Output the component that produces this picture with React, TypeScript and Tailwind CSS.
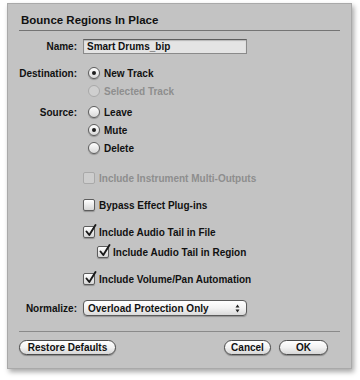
import React from "react";

const font = { fontFamily: '"Liberation Sans", Arial, sans-serif' };

function Radio({ on, disabled }: { on?: boolean; disabled?: boolean }) {
  return (
    <span
      className={
        "flex h-[12px] w-[12px] shrink-0 items-center justify-center rounded-full border " +
        (disabled
          ? "border-[#a9a9a9] bg-[#cfcfcf]"
          : "border-[#5d5d5d] bg-gradient-to-b from-[#ffffff] to-[#d8d8d8] shadow-[0_1px_1px_rgba(0,0,0,0.25)]")
      }
    >
      {on && <span className="h-[4px] w-[4px] rounded-full bg-[#1e1e1e]" />}
    </span>
  );
}

function Check({ on, disabled }: { on?: boolean; disabled?: boolean }) {
  return (
    <span
      className={
        "relative flex h-[12px] w-[12px] shrink-0 rounded-[2px] border " +
        (disabled
          ? "border-[#a9a9a9] bg-[#cdcdcd]"
          : "border-[#5d5d5d] bg-gradient-to-b from-[#ffffff] to-[#d6d6d6] shadow-[0_1px_1px_rgba(0,0,0,0.25)]")
      }
    >
      {on && (
        <svg
          className="absolute left-[1px] top-[-3px]"
          width="12"
          height="13"
          viewBox="0 0 12 13"
        >
          <path
            d="M1.5 7.5 L4.3 11 L10.5 1"
            fill="none"
            stroke="#1a1a1a"
            strokeWidth="1.9"
            strokeLinecap="round"
            strokeLinejoin="round"
          />
        </svg>
      )}
    </span>
  );
}

function Row({
  label,
  children,
  className = "",
}: {
  label?: string;
  children: React.ReactNode;
  className?: string;
}) {
  return (
    <div className={"flex items-center " + className}>
      <div className="w-[58px] shrink-0 whitespace-nowrap text-right">{label}</div>
      <div className="ml-[6px] flex items-center">{children}</div>
    </div>
  );
}

function Btn({ children, w }: { children: React.ReactNode; w: string }) {
  return (
    <div
      className={
        "flex h-[15px] items-center justify-center rounded-full border border-[#4b4b4b] bg-gradient-to-b from-[#ffffff] via-[#f2f2f2] to-[#d6d6d6] shadow-[0_1px_1px_rgba(0,0,0,0.3)] " +
        w
      }
    >
      {children}
    </div>
  );
}

export default function App() {
  return (
    <div className="h-[380px] w-[360px] bg-white pl-[7px] pt-[3px]" style={font}>
      <div className="h-[366px] w-[345px] border border-[#a9a9a9] bg-[#c3c3c3] px-[11px] text-[10px] font-bold text-[#111] shadow-[2px_3px_5px_rgba(0,0,0,0.35)]">
        <div className="mt-[9px] pl-[2px] text-[11.5px] leading-[15px]">Bounce Regions In Place</div>
        <div className="mt-[2px] h-[1px] w-[321px] bg-[#747474]" />

        <Row label="Name:" className="mt-[8px]">
          <div className="flex h-[15px] w-[164px] items-center border border-[#8a8a8a] border-t-[#5e5e5e] bg-[#e4e4e4] pl-[3px] shadow-[inset_0_1px_1px_rgba(0,0,0,0.2)]">
            Smart Drums_bip
          </div>
        </Row>

        <Row label="Destination:" className="mt-[10px] h-[18px]">
          <span className="ml-[5px] flex items-center gap-[4px]">
            <Radio on />
            New Track
          </span>
        </Row>
        <Row className="h-[18px]">
          <span className="ml-[5px] flex items-center gap-[4px] text-[#8e8e8e]">
            <Radio disabled />
            Selected Track
          </span>
        </Row>

        <Row label="Source:" className="mt-[3px] h-[18px]">
          <span className="ml-[5px] flex items-center gap-[4px]">
            <Radio />
            Leave
          </span>
        </Row>
        <Row className="h-[18px]">
          <span className="ml-[5px] flex items-center gap-[4px]">
            <Radio on />
            Mute
          </span>
        </Row>
        <Row className="h-[18px]">
          <span className="ml-[5px] flex items-center gap-[4px]">
            <Radio />
            Delete
          </span>
        </Row>

        <Row className="mt-[12px] h-[18px]">
          <span className="flex items-center gap-[4px] text-[#8e8e8e]">
            <Check disabled />
            Include Instrument Multi-Outputs
          </span>
        </Row>
        <Row className="mt-[9px] h-[18px]">
          <span className="flex items-center gap-[4px]">
            <Check />
            Bypass Effect Plug-ins
          </span>
        </Row>
        <Row className="mt-[9px] h-[18px]">
          <span className="flex items-center gap-[4px]">
            <Check on />
            Include Audio Tail in File
          </span>
        </Row>
        <Row className="mt-[2px] h-[18px]">
          <span className="ml-[14px] flex items-center gap-[4px]">
            <Check on />
            Include Audio Tail in Region
          </span>
        </Row>
        <Row className="mt-[9px] h-[18px]">
          <span className="flex items-center gap-[4px]">
            <Check on />
            Include Volume/Pan Automation
          </span>
        </Row>

        <Row label="Normalize:" className="mt-[12px]">
          <div className="flex h-[16px] w-[164px] items-center justify-between rounded-[4px] border border-[#5a5a5a] bg-gradient-to-b from-[#ffffff] via-[#f3f3f3] to-[#dadada] pl-[4px] pr-[6px] shadow-[0_1px_1px_rgba(0,0,0,0.25)]">
            <span>Overload Protection Only</span>
            <svg width="5" height="9" viewBox="0 0 5 9">
              <path d="M2.5 0.5 L4.5 3.5 L0.5 3.5 Z M2.5 8.5 L4.5 5.5 L0.5 5.5 Z" fill="#222" />
            </svg>
          </div>
        </Row>

        <div className="mt-[15px] h-[1px] w-[321px] bg-[#8a8a8a]" />

        <div className="mt-[8px] flex items-center">
          <Btn w="w-[97px]">Restore Defaults</Btn>
          <div className="flex-1" />
          <Btn w="w-[47px]">Cancel</Btn>
          <div className="w-[8px]" />
          <Btn w="w-[49px]">OK</Btn>
          <div className="w-[12px]" />
        </div>
      </div>
    </div>
  );
}
